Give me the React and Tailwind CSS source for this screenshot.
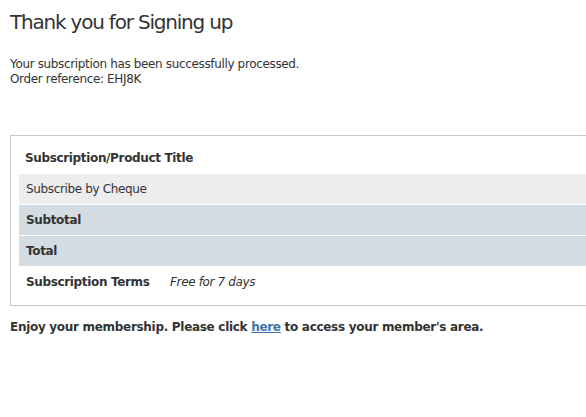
export default function App() {
  return (
    <div className="w-[586px] h-[417px] overflow-hidden bg-white text-[#333] font-['DejaVu_Sans',sans-serif]">
      <div className="pl-[10px] pt-[10px]">
        <h1 className="text-[20px] leading-[24px] tracking-[-1.2px] whitespace-nowrap">Thank you for Signing up</h1>

        <div className="mt-[23px] text-[12px] leading-[15px] tracking-[-0.35px]">
          <p>Your subscription has been successfully processed.</p>
          <p>Order reference: EHJ8K</p>
        </div>

        <div className="mt-[48px] w-[700px] border border-[#c8c8c8] pt-[7px] pb-[8px] px-[8px] text-[12px] tracking-[-0.35px]">
          <div className="flex flex-col gap-px">
            <div className="h-[30px] flex items-center pl-[6px] font-bold">Subscription/Product Title</div>
            <div className="h-[30px] flex items-center pl-[7px] bg-[#ededed]">Subscribe by Cheque</div>
            <div className="h-[30px] flex items-center pl-[7px] bg-[#d4dce3] font-bold">Subtotal</div>
            <div className="h-[30px] flex items-center pl-[7px] bg-[#d4dce3] font-bold">Total</div>
            <div className="h-[30px] flex items-center pl-[7px]">
              <span className="w-[144px] font-bold">Subscription Terms</span>
              <span className="italic">Free for 7 days</span>
            </div>
          </div>
        </div>

        <p className="mt-[14px] text-[12px] leading-[15px] font-bold tracking-[-0.3px] whitespace-nowrap">
          Enjoy your membership. Please click{' '}
          <a href="#" className="text-[#3c74a8] underline">here</a>{' '}
          to access your member's area.
        </p>
      </div>
    </div>
  )
}
